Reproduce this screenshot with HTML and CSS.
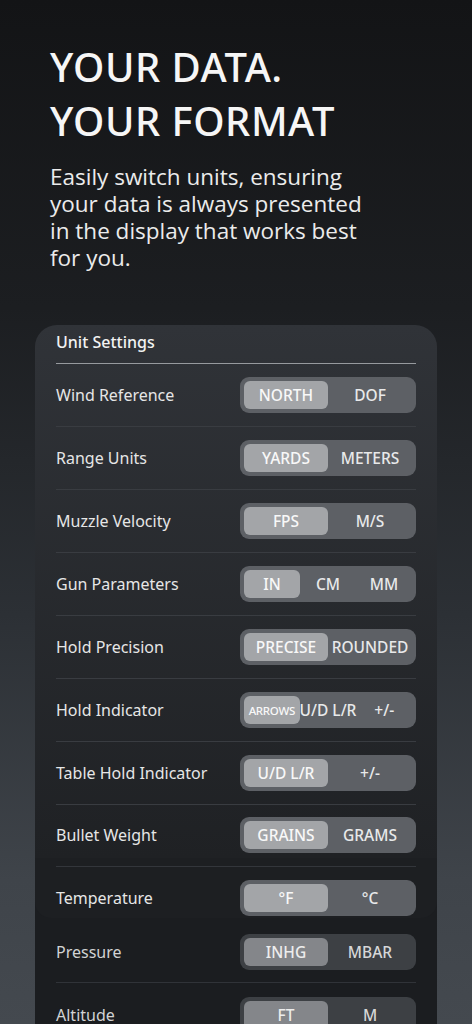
FILE: index.html
```html
<!DOCTYPE html>
<html lang="en">
<head>
    <meta charset="UTF-8">
    <meta name="viewport" content="width=device-width, initial-scale=1.0">
    <title>Your Data. Your Format</title>
    <link rel="stylesheet" href="styles.css">
</head>
<body>
    <header class="hero">
        <h1>YOUR DATA.<br>YOUR FORMAT</h1>
        <p>Easily switch units, ensuring your data is always presented in the display that works best for you.</p>
    </header>

    <section class="card">
        <div class="card-top">
            <div class="card-title">Unit Settings</div>

            <div class="row">
                <span class="label">Wind Reference</span>
                <div class="seg"><span class="on">NORTH</span><span>DOF</span></div>
            </div>
            <div class="row">
                <span class="label">Range Units</span>
                <div class="seg"><span class="on">YARDS</span><span>METERS</span></div>
            </div>
            <div class="row">
                <span class="label">Muzzle Velocity</span>
                <div class="seg"><span class="on">FPS</span><span>M/S</span></div>
            </div>
            <div class="row">
                <span class="label">Gun Parameters</span>
                <div class="seg"><span class="on">IN</span><span>CM</span><span>MM</span></div>
            </div>
            <div class="row">
                <span class="label">Hold Precision</span>
                <div class="seg"><span class="on">PRECISE</span><span>ROUNDED</span></div>
            </div>
            <div class="row">
                <span class="label">Hold Indicator</span>
                <div class="seg"><span class="on small">ARROWS</span><span>U/D L/R</span><span>+/-</span></div>
            </div>
            <div class="row">
                <span class="label">Table Hold Indicator</span>
                <div class="seg"><span class="on">U/D L/R</span><span>+/-</span></div>
            </div>
            <div class="row row-last">
                <span class="label">Bullet Weight</span>
                <div class="seg"><span class="on">GRAINS</span><span>GRAMS</span></div>
            </div>
        </div>

        <div class="card-lower">
            <div class="lower-group">
                <div class="row row-temp">
                    <span class="label">Temperature</span>
                    <div class="seg"><span class="on">°F</span><span>°C</span></div>
                </div>
            </div>
            <div class="lower-rows">
                <div class="row row-pressure">
                    <span class="label dim">Pressure</span>
                    <div class="seg dark"><span class="on">INHG</span><span>MBAR</span></div>
                </div>
                <div class="row row-alt">
                    <span class="label dim">Altitude</span>
                    <div class="seg dark"><span class="on">FT</span><span>M</span></div>
                </div>
            </div>
        </div>
    </section>
</body>
</html>
```

FILE: styles.css
```css
* {
    box-sizing: border-box;
}

body {
    margin: 0;
    height: 1024px;
    overflow: hidden;
    font-family: "Noto Sans", "Open Sans", sans-serif;
    color: #ececec;
    background: linear-gradient(180deg, #131416 0%, #1c1e21 30%, #2c3035 60%, #3f444a 86%, #44494f 100%);
}

.hero {
    padding: 40px 50px 0;
}

.hero h1 {
    margin: 0;
    font-size: 40px;
    line-height: 54px;
    font-weight: 500;
    letter-spacing: 0.5px;
    color: #f6f6f6;
}

.hero p {
    width: 320px;
    margin: 15px 0 0;
    font-family: "Open Sans", sans-serif;
    font-size: 22.5px;
    line-height: 27px;
    color: #ebebeb;
}

.card {
    margin: 54px 35px 0;
    border-radius: 22px 22px 0 0;
    overflow: hidden;
}

.card-top {
    padding: 0 21px;
    background: linear-gradient(180deg, #303338 0%, #1f2124 100%);
}

.card-title {
    padding: 6px 0 10px;
    line-height: 22px;
    font-size: 16px;
    font-weight: 500;
    color: #f2f2f2;
    border-bottom: 1px solid #979a9e;
}

.row {
    display: flex;
    align-items: center;
    justify-content: space-between;
    height: 63px;
    border-bottom: 1px solid #393c41;
}

.row-last {
    height: 53px;
    padding-top: 7px;
    border-bottom: none;
}

.label {
    font-size: 16px;
    color: #e6e6e6;
}

.label.dim {
    color: #d2d3d4;
}

.seg {
    display: grid;
    grid-auto-flow: column;
    grid-auto-columns: 1fr;
    width: 176px;
    height: 36px;
    padding: 4px;
    border-radius: 9px;
    background-color: #5d6065;
}

.seg span {
    display: flex;
    align-items: center;
    justify-content: center;
    border-radius: 6px;
    font-size: 15.5px;
    font-weight: 500;
    color: #e8e9ea;
    white-space: nowrap;
}

.seg span.on {
    background-color: #a3a5a8;
    color: #f8f8f8;
}

.seg span.small {
    font-size: 11.5px;
    letter-spacing: -0.3px;
}

.seg.dark {
    background-color: #3d4044;
}

.seg.dark span {
    color: #d6d7d8;
}

.seg.dark span.on {
    background-color: #84868a;
    color: #ededed;
}

.card-lower {
    background-color: #1b1d20;
    height: 300px;
}

.lower-group {
    padding: 8px 21px 0;
    background-color: #1d1f22;
    border-radius: 0 0 16px 16px;
}

.row-temp {
    height: auto;
    padding: 13px 0 2px;
    border-bottom: none;
    border-top: 1px solid #33363b;
}

.lower-rows {
    padding: 0 21px;
}

.row-pressure {
    height: auto;
    padding: 16px 0 12px;
    border-bottom: 1px solid #303338;
}

.row-alt {
    height: auto;
    padding: 14px 0 12px;
    border-bottom: none;
}
```
